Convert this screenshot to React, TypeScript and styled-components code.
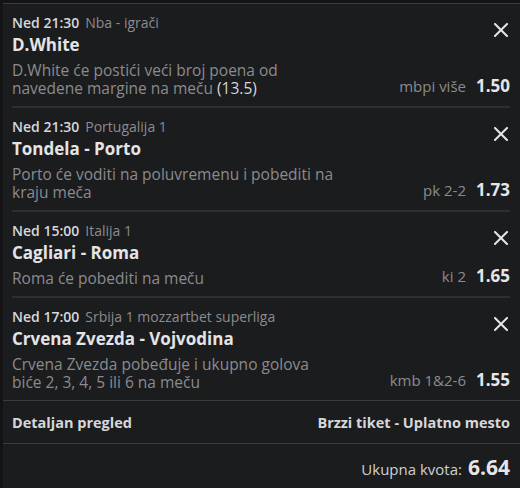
import React from 'react';
import styled, { createGlobalStyle } from 'styled-components';

const GlobalStyle = createGlobalStyle`
  html, body {
    margin: 0;
    padding: 0;
    background: #141417;
    font-family: "Open Sans", Lato, sans-serif;
  }
`;

interface IPick {
  time: string;
  league: string;
  title: string;
  description: string;
  extra?: string;
  market: string;
  odds: string;
}

const picks: IPick[] = [
  {
    time: 'Ned 21:30',
    league: 'Nba - igrači',
    title: 'D.White',
    description: 'D.White će postići veći broj poena od navedene margine na meču',
    extra: '(13.5)',
    market: 'mbpi više',
    odds: '1.50',
  },
  {
    time: 'Ned 21:30',
    league: 'Portugalija 1',
    title: 'Tondela - Porto',
    description: 'Porto će voditi na poluvremenu i pobediti na kraju meča',
    market: 'pk 2-2',
    odds: '1.73',
  },
  {
    time: 'Ned 15:00',
    league: 'Italija 1',
    title: 'Cagliari - Roma',
    description: 'Roma će pobediti na meču',
    market: 'ki 2',
    odds: '1.65',
  },
  {
    time: 'Ned 17:00',
    league: 'Srbija 1 mozzartbet superliga',
    title: 'Crvena Zvezda - Vojvodina',
    description: 'Crvena Zvezda pobeđuje i ukupno golova biće 2, 3, 4, 5 ili 6 na meču',
    market: 'kmb 1&2-6',
    odds: '1.55',
  },
];

const Page = styled.div`
  width: 520px;
  height: 488px;
  padding-left: 3px;
  box-sizing: border-box;
  overflow: hidden;
`;

const Panel = styled.div`
  background: #1b1c1e;
  border-top: 1px solid #3a3b3e;
  margin-top: 3px;
  height: 485px;
`;

const List = styled.div`
  padding: 0 10px 0 9px;
`;

const Row = styled.div`
  display: grid;
  grid-template-columns: 1fr auto;
  column-gap: 14px;
  padding: 10px 0 9px;
  border-bottom: 2px solid #2e2f32;

  &:last-child {
    border-bottom: none;
  }
`;

const Info = styled.div`
  min-width: 0;
`;

const Meta = styled.div`
  font-size: 14px;
  line-height: 18px;
  color: #8b8b8e;
  white-space: nowrap;

  b {
    color: #d7d7d9;
    font-weight: 600;
    margin-right: 6px;
  }
`;

const Title = styled.div`
  margin-top: 2px;
  font-size: 17px;
  line-height: 22px;
  font-weight: 700;
  color: #e4e4e6;
  white-space: nowrap;
`;

const Description = styled.div`
  margin-top: 5px;
  max-width: 326px;
  font-size: 15.5px;
  line-height: 18px;
  color: #8b8b8e;

  span {
    color: #d7d7d9;
  }
`;

const Side = styled.div`
  display: flex;
  flex-direction: column;
  align-items: flex-end;
  justify-content: space-between;
`;

const Close = styled.button`
  all: unset;
  margin-top: 9px;
  margin-right: 2px;
  width: 14px;
  height: 14px;
  display: flex;
`;

const OddsLine = styled.div`
  display: flex;
  align-items: baseline;
  gap: 10px;
  white-space: nowrap;
`;

const Market = styled.span`
  font-size: 15px;
  color: #8b8b8e;
`;

const Odds = styled.span<{ $large?: boolean }>`
  font-size: ${(p) => (p.$large ? '21px' : '17px')};
  font-weight: 700;
  color: #e6e6e8;
`;

const Footer = styled.div`
  display: flex;
  justify-content: space-between;
  align-items: center;
  height: 42px;
  padding: 0 10px 0 9px;
  border-top: 1px solid #3a3b3e;
  border-bottom: 1px solid #3a3b3e;
  font-size: 14.5px;
  font-weight: 700;
  color: #d7d7d9;
`;

const Total = styled.div`
  display: flex;
  justify-content: flex-end;
  align-items: baseline;
  gap: 6px;
  height: 42px;
  padding: 9px 10px 0 9px;
  box-sizing: border-box;
  font-size: 15px;
  color: #d0d0d2;
`;

const CloseIcon = () => (
  <svg width="14" height="14" viewBox="0 0 14 14">
    <path d="M1 1L13 13M13 1L1 13" stroke="#e6e6e8" strokeWidth="2" strokeLinecap="square" />
  </svg>
);

const PickRow = ({ pick }: { pick: IPick }) => (
  <Row>
    <Info>
      <Meta>
        <b>{pick.time}</b>
        {pick.league}
      </Meta>
      <Title>{pick.title}</Title>
      <Description>
        {pick.description}
        {pick.extra && <> <span>{pick.extra}</span></>}
      </Description>
    </Info>
    <Side>
      <Close aria-label="Ukloni">
        <CloseIcon />
      </Close>
      <OddsLine>
        <Market>{pick.market}</Market>
        <Odds>{pick.odds}</Odds>
      </OddsLine>
    </Side>
  </Row>
);

export default function App() {
  return (
    <Page>
      <GlobalStyle />
      <Panel>
        <List>
          {picks.map((pick) => (
            <PickRow key={pick.title} pick={pick} />
          ))}
        </List>
        <Footer>
          <span>Detaljan pregled</span>
          <span>Brzzi tiket - Uplatno mesto</span>
        </Footer>
        <Total>
          Ukupna kvota: <Odds $large>6.64</Odds>
        </Total>
      </Panel>
    </Page>
  );
}
